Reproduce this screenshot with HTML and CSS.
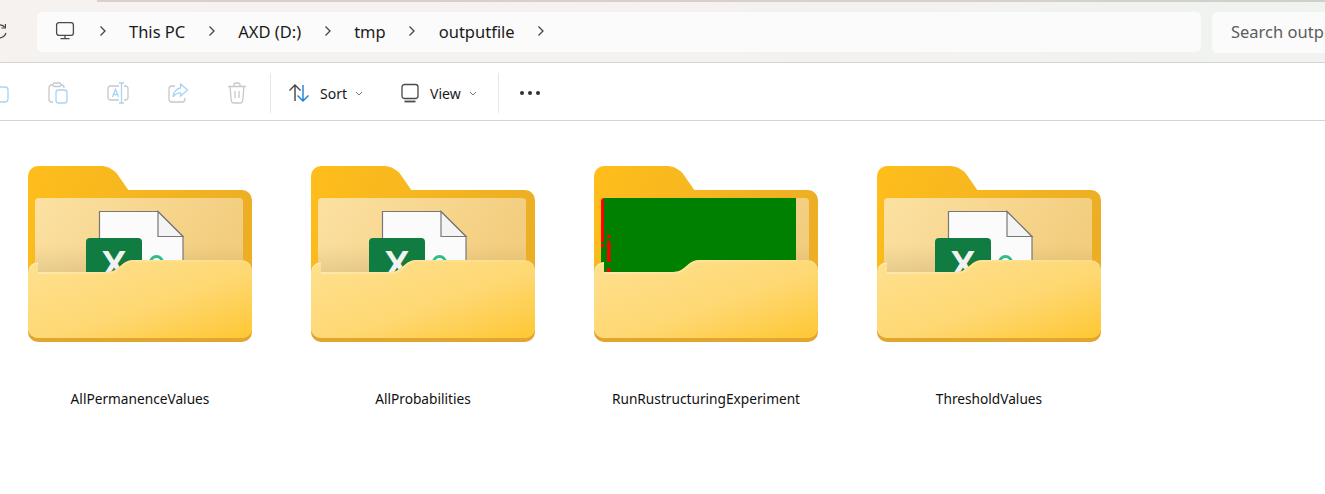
FILE: index.html
```html
<!DOCTYPE html>
<html lang="en">
<head>
    <meta charset="UTF-8">
    <meta name="viewport" content="width=device-width, initial-scale=1.0">
    <title>outputfile - File Explorer</title>
    <link rel="stylesheet" href="styles.css">
</head>
<body>
    <header class="topbar">
        <svg class="refresh" width="14" height="18" viewBox="0 0 14 18" fill="none" stroke="#444" stroke-width="1.2">
            <path d="M12 4.5A6.5 6.5 0 1 0 13 10"/>
            <path d="M12.4 1v4h-4"/>
        </svg>
        <nav class="address">
            <svg class="pc-icon" width="20" height="20" viewBox="0 0 20 20" fill="none" stroke="#4a4a4a" stroke-width="1.3">
                <rect x="1.6" y="1.6" width="16.8" height="12.8" rx="2.4"/>
                <path d="M10 14.5v3M5.5 17.6h9"/>
            </svg>
            <svg class="chevron" width="8" height="12" viewBox="0 0 8 12"><path d="M1.5 1.5 6 6l-4.500 4.500"/></svg>
            <span>This PC</span>
            <svg class="chevron" width="8" height="12" viewBox="0 0 8 12"><path d="M1.5 1.5 6 6l-4.500 4.500"/></svg>
            <span>AXD (D:)</span>
            <svg class="chevron" width="8" height="12" viewBox="0 0 8 12"><path d="M1.5 1.5 6 6l-4.500 4.500"/></svg>
            <span>tmp</span>
            <svg class="chevron" width="8" height="12" viewBox="0 0 8 12"><path d="M1.5 1.5 6 6l-4.500 4.500"/></svg>
            <span>outputfile</span>
            <svg class="chevron" width="8" height="12" viewBox="0 0 8 12"><path d="M1.5 1.5 6 6l-4.500 4.500"/></svg>
        </nav>
        <div class="search">Search outp</div>
    </header>

    <div class="toolbar">
        <div class="tool-icons">
            <svg width="20" height="22" viewBox="0 0 20 22" fill="none" stroke="#a9d3f2" stroke-width="1.300"><rect x="6" y="5" width="13" height="15" rx="3"/></svg>
            <svg width="20" height="22" viewBox="0 0 20 22" fill="none" stroke-width="1.300">
                <path stroke="#c8c8c8" d="M5 20H3.500A2.500 2.500 0 0 1 1 17.500V5.500A2.500 2.500 0 0 1 3.500 3H5M13 3h.5A2.500 2.500 0 0 1 16 5.500V6"/>
                <rect stroke="#c8c8c8" x="5" y="1" width="8" height="3.500" rx="1.500"/>
                <rect stroke="#a9d3f2" x="8" y="8" width="11" height="13" rx="2.500"/>
            </svg>
            <svg width="22" height="22" viewBox="0 0 22 22" fill="none" stroke-width="1.300">
                <path stroke="#c8c8c8" d="M12 4H3.500A2.500 2.500 0 0 0 1 6.500v9A2.500 2.500 0 0 0 3.500 18H12M17 4h1.500A2.500 2.500 0 0 1 21 6.500v9a2.500 2.500 0 0 1-2.500 2.500H17"/>
                <path stroke="#a9d3f2" d="M14.500 1v20M12 1h5M12 21h5M5.500 15l3-8 3 8M6.600 12.500h3.800"/>
            </svg>
            <svg width="20" height="22" viewBox="0 0 20 22" fill="none" stroke-width="1.300">
                <path stroke="#c8c8c8" d="M7 4H4A3 3 0 0 0 1 7v10a3 3 0 0 0 3 3h10a3 3 0 0 0 3-3v-1"/>
                <path stroke="#a9d3f2" d="M12.500 2 19.500 8l-7 6v-3.200C9 10.800 6.800 12 5 15c.3-4.500 3-8 7.500-9z"/>
            </svg>
            <svg width="20" height="22" viewBox="0 0 20 22" fill="none" stroke="#c8c8c8" stroke-width="1.300">
                <path d="M1 4.500h18M7 4.500V3a2 2 0 0 1 2-2h2a2 2 0 0 1 2 2v1.500M3 4.500l1.300 14a2.500 2.500 0 0 0 2.500 2.500h6.400a2.500 2.500 0 0 0 2.500-2.500l1.300-14M8 9v7M12 9v7"/>
            </svg>
        </div>
        <span class="divider"></span>
        <button class="tool-btn sort-btn">
            <svg width="22" height="20" viewBox="0 0 22 20" fill="none" stroke-width="1.400">
                <path stroke="#444" d="M7 18V2M1.500 7.500 7 2l5.500 5.500"/>
                <path stroke="#1b80d6" d="M15 2v16M9.500 12.500 15 18l5.500-5.500"/>
            </svg>
            <span>Sort</span>
            <svg class="caret" width="8" height="5" viewBox="0 0 8 5"><path d="M1 1l3 3 3-3"/></svg>
        </button>
        <button class="tool-btn view-btn">
            <svg width="18" height="20" viewBox="0 0 18 20" fill="none" stroke="#4a4a4a" stroke-width="1.300">
                <rect x="1" y="1.500" width="16" height="14" rx="2.500"/>
                <path stroke-width="1.800" d="M3.500 18.500h11"/>
            </svg>
            <span>View</span>
            <svg class="caret" width="8" height="5" viewBox="0 0 8 5"><path d="M1 1l3 3 3-3"/></svg>
        </button>
        <span class="divider"></span>
        <div class="more"><i></i><i></i><i></i></div>
    </div>

    <main class="files">
        <div class="tile">
            <svg class="folder" width="224" height="176" viewBox="0 0 224 176">
                <use href="#folder-back"/>
                <use href="#xlsx-doc"/>
                <use href="#folder-front"/>
            </svg>
            <div class="tile-name">AllPermanenceValues</div>
        </div>
        <div class="tile">
            <svg class="folder" width="224" height="176" viewBox="0 0 224 176">
                <use href="#folder-back"/>
                <use href="#xlsx-doc"/>
                <use href="#folder-front"/>
            </svg>
            <div class="tile-name">AllProbabilities</div>
        </div>
        <div class="tile">
            <svg class="folder" width="224" height="176" viewBox="0 0 224 176">
                <use href="#folder-back"/>
                <!-- thumbnail of the chart inside this folder -->
                <path fill="#008000" d="M11 32h191v80H7V36a4 4 0 0 1 4-4z"/>
                <path fill="#ff0000" d="M7 76V36a4 4 0 0 1 3-3.900V76zM7 78h3v3H7zM13 69h3.500v3H13zM13 75h3.500v21H13zM13 102h3.500v4H13z"/>
                <use href="#folder-front"/>
            </svg>
            <div class="tile-name">RunRustructuringExperiment</div>
        </div>
        <div class="tile">
            <svg class="folder" width="224" height="176" viewBox="0 0 224 176">
                <use href="#folder-back"/>
                <use href="#xlsx-doc"/>
                <use href="#folder-front"/>
            </svg>
            <div class="tile-name">ThresholdValues</div>
        </div>
    </main>

    <svg class="svg-defs" width="0" height="0">
        <defs>
            <linearGradient id="backFill" x1="0" y1="0" x2="1" y2="0.300">
                <stop offset="0" stop-color="#ffbe1b"/>
                <stop offset="1" stop-color="#ecae25"/>
            </linearGradient>
            <linearGradient id="paperFill" x1="0" y1="0" x2="1" y2="0.300">
                <stop offset="0" stop-color="#fce1a2"/>
                <stop offset="1" stop-color="#f2cd7e"/>
            </linearGradient>
            <linearGradient id="paperShade" x1="0" y1="0" x2="0" y2="1">
                <stop offset="0" stop-color="#000" stop-opacity="0"/>
                <stop offset="1" stop-color="#000" stop-opacity="0.080"/>
            </linearGradient>
            <linearGradient id="frontEdge" x1="0" y1="0" x2="1" y2="0">
                <stop offset="0" stop-color="#ffe9ae"/>
                <stop offset="1" stop-color="#fedb7c"/>
            </linearGradient>
            <linearGradient id="frontFill" x1="0" y1="0" x2="1" y2="1">
                <stop offset="0" stop-color="#fee08f"/>
                <stop offset="0.550" stop-color="#fed873"/>
                <stop offset="1" stop-color="#fec733"/>
            </linearGradient>
            <g id="folder-back">
                <path fill="url(#backFill)" d="M10 0H72C79 0 84 2.500 88.700 7.300L100.300 24H214a10 10 0 0 1 10 10v120H0V10A10 10 0 0 1 10 0z"/>
                <rect x="7" y="32" width="208" height="90" rx="4" fill="url(#paperFill)"/>
                <rect x="7" y="78" width="208" height="30" fill="url(#paperShade)"/>
            </g>
            <g id="xlsx-doc">
                <path fill="#fbfbfb" stroke="#777" stroke-width="1.200" d="M71.500 45.500H130L155 70.500V110H71.500z"/>
                <path fill="#f4f4f4" stroke="#777" stroke-width="1.200" d="M130 45.500V70.500H155z"/>
                <circle cx="128.500" cy="96.500" r="6" fill="none" stroke="#31bd85" stroke-width="3"/>
                <rect x="58" y="72" width="56" height="46" rx="4" fill="#107c41"/>
                <text class="xlsx-x" x="86" y="112">X</text>
            </g>
            <g id="folder-front">
                <path fill="#e2a52e" d="M10 106h69c4 0 7-1 11-4l6-5c3-2 6-3 9-3h109a10 10 0 0 1 10 10v62a10 10 0 0 1-10 10H10a10 10 0 0 1-10-10v-60a10 10 0 0 1 10-10z"/>
                <path fill="url(#frontEdge)" d="M10 106h69c4 0 7-1 11-4l6-5c3-2 6-3 9-3h109a10 10 0 0 1 10 10v58a10 10 0 0 1-10 10H10a10 10 0 0 1-10-10v-56a10 10 0 0 1 10-10z"/>
                <path fill="url(#frontFill)" d="M10 108h69c5 0 8-1 12-4l6-5c3-2 5-3 8-3h109a10 10 0 0 1 10 10v56a10 10 0 0 1-10 10H10a10 10 0 0 1-10-10v-54a10 10 0 0 1 10-10z"/>
            </g>
        </defs>
    </svg>
</body>
</html>
```

FILE: styles.css
```css
* {
    box-sizing: border-box;
}
html, body {
    height: 100%;
}
body {
    margin: 0;
    background: #fff;
    color: #1a1a1a;
    font-family: "Noto Sans", "Open Sans", sans-serif;
    overflow: hidden;
}
.topbar {
    display: flex;
    align-items: flex-start;
    height: 63px;
    padding-top: 12px;
    background:
        linear-gradient(90deg, #d8d0cc, #d8d0cc 70%, #c6d2c8) 97px 0 / 100% 2px no-repeat,
        linear-gradient(90deg, #f5f2f0, #f5f1ee 45%, #f0f3f0);
    border-bottom: 1px solid #d6d3cf;
}
.refresh {
    flex: none;
    margin: 11px 30px 0 -7px;
}
.address {
    display: flex;
    align-items: center;
    gap: 22.500px;
    flex: none;
    width: 1164px;
    height: 40px;
    padding: 0 0 2px 18px;
    background: #fbfbfb;
    border-radius: 5px;
    font-size: 16.500px;
}
.pc-icon {
    margin-right: 1px;
}
.chevron {
    fill: none;
    stroke: #444;
    stroke-width: 1.3;
}
.search {
    flex: none;
    width: 240px;
    height: 41px;
    margin-left: 11px;
    padding-left: 19px;
    line-height: 40px;
    background: #fbfbfb;
    border-radius: 5px;
    font-size: 16.500px;
    color: #5c5c5c;
    white-space: nowrap;
}
.toolbar {
    display: flex;
    align-items: center;
    height: 58px;
    padding-top: 3px;
    border-bottom: 1px solid #d5d3d1;
}
.tool-icons {
    display: flex;
    align-items: center;
    gap: 39px;
    margin-left: -11px;
}
.divider {
    width: 1px;
    height: 40px;
    background: #e8e8e8;
    margin-left: 23px;
}
.tool-btn {
    display: flex;
    align-items: center;
    padding: 0;
    border: none;
    background: none;
    font: inherit;
    font-size: 14px;
    color: #1a1a1a;
}
.sort-btn {
    margin-left: 17px;
}
.sort-btn span {
    margin-left: 10px;
}
.view-btn {
    margin-left: 38px;
}
.view-btn span {
    margin-left: 11px;
}
.caret {
    margin-left: 8px;
    fill: none;
    stroke: #777;
    stroke-width: 1;
}
.view-btn + .divider {
    margin-left: 21px;
}
.more {
    display: flex;
    gap: 4px;
    margin-left: 21px;
}
.more i {
    width: 4px;
    height: 4px;
    border-radius: 50%;
    background: #333;
}
.files {
    display: flex;
    gap: 59px;
    padding: 45px 0 0 28px;
}
.tile {
    width: 224px;
}
.folder {
    display: block;
}
.tile-name {
    margin-top: 47px;
    text-align: center;
    font-size: 13.700px;
    line-height: 20px;
    color: #111;
    white-space: nowrap;
}
.xlsx-x {
    font-family: "Liberation Sans", sans-serif;
    font-weight: 700;
    font-size: 38px;
    fill: #f2f2f2;
    text-anchor: middle;
}
.svg-defs {
    display: block;
    overflow: hidden;
}
```
